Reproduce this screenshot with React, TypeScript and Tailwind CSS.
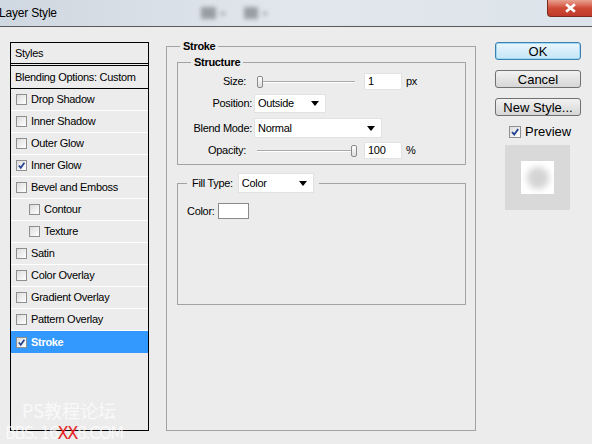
import React from 'react';

type Row = { label: string; checked?: boolean; indent?: boolean; selected?: boolean };

const rows: Row[] = [
  { label: 'Drop Shadow' },
  { label: 'Inner Shadow' },
  { label: 'Outer Glow' },
  { label: 'Inner Glow', checked: true },
  { label: 'Bevel and Emboss' },
  { label: 'Contour', indent: true },
  { label: 'Texture', indent: true },
  { label: 'Satin' },
  { label: 'Color Overlay' },
  { label: 'Gradient Overlay' },
  { label: 'Pattern Overlay' },
  { label: 'Stroke', checked: true, selected: true },
];

const Tick = () => (
  <svg viewBox="0 0 10 10" className="w-full h-full">
    <path d="M2 5 L4.2 7.6 L8.2 2" fill="none" stroke="#21408f" strokeWidth="1.8" />
  </svg>
);

const SmallBox = ({ checked }: { checked?: boolean }) => (
  <span className="w-[11px] h-[11px] shrink-0 border border-[#8f8f8f] bg-gradient-to-br from-[#dcdcdc] to-[#ffffff] flex items-center justify-center">
    {checked && <Tick />}
  </span>
);

const Arrow = () => (
  <svg viewBox="0 0 8 5" className="w-[8px] h-[5px]">
    <path d="M0 0 H8 L4 5 Z" fill="#000" />
  </svg>
);

const Select = ({ value, w }: { value: string; w: string }) => (
  <div className={`${w} h-full bg-white border border-[#e2e2e2] flex items-center justify-between pl-[3px] pr-[6px]`}>
    <span>{value}</span>
    <Arrow />
  </div>
);

const Slider = ({ pos }: { pos: 'start' | 'end' }) => (
  <div className="relative w-[98px] h-[14px] flex items-center">
    <div className="w-full h-[2px] border-t border-[#a9a9a9] border-b border-b-white" />
    <div
      className={`absolute top-[1px] w-[6px] h-[12px] rounded-[2px] border border-[#8a8a8a] bg-gradient-to-b from-white to-[#dcdcdc] ${
        pos === 'start' ? 'left-0' : 'right-[-2px]'
      }`}
    />
  </div>
);

const NumInput = ({ value }: { value: string }) => (
  <div className="w-[38px] h-[17px] bg-white border border-[#e2e2e2] flex items-center pl-[3px]">
    {value}
  </div>
);

const Button = ({ label, primary }: { label: string; primary?: boolean }) => (
  <div
    className={`w-[86px] h-[18px] rounded-[3px] flex items-center justify-center text-[13px] leading-none ${
      primary
        ? 'border border-[#3c7fb1] bg-gradient-to-b from-[#eaf6fd] to-[#c4e5f6] shadow-[0_0_0_1px_#9fd8f2_inset]'
        : 'border border-[#707070] bg-gradient-to-b from-[#f2f2f2] to-[#d6d6d6]'
    }`}
  >
    {label}
  </div>
);

export default function App() {
  return (
    <div className="relative w-[592px] h-[444px] overflow-hidden bg-[#ececec] text-black font-['Liberation_Sans',Arial,sans-serif]">
      {/* title bar */}
      <div className="h-[27px] border-b border-[#595959] bg-gradient-to-r from-[#cfd7e0] via-[#e2e7ed] to-[#dce3ea] flex items-center relative">
        <span className="text-[12px] -ml-[1px] tracking-[-0.2px]">Layer Style</span>
        <div className="flex items-center gap-[5px] ml-[144px] blur-[2px] opacity-60">
          <div className="w-[15px] h-[12px] bg-[#6b6f75]" />
          <div className="w-[4px] h-[3px] bg-[#6b6f75]" />
          <div className="w-[14px] h-[12px] bg-[#6b6f75] ml-[14px]" />
          <div className="w-[4px] h-[3px] bg-[#6b6f75]" />
        </div>
        <div className="absolute right-0 top-0 w-[45px] h-[17px] rounded-bl-[4px] border border-t-0 border-r-0 border-[#7a2a1f] bg-gradient-to-b from-[#e8a090] via-[#cf4a36] to-[#c0392b] flex items-center justify-center">
          <svg viewBox="0 0 10 9" className="w-[11px] h-[10px]">
            <path d="M1 1 L9 8 M9 1 L1 8" stroke="#fff" strokeWidth="2.4" />
          </svg>
        </div>
      </div>

      <div className="flex items-start pl-[10px] pt-[15px] text-[11px] tracking-[-0.3px]">
        {/* styles list */}
        <div className="w-[139px] h-[389px] border border-black">
          <div className="h-[23px] flex items-center pl-[4px] border-b-[3px] border-double border-black">Styles</div>
          <div className="h-[23px] flex items-center pl-[4px] border-b border-black">Blending Options: Custom</div>
          {rows.map((r) => (
            <div
              key={r.label}
              className={`h-[22px] flex items-center gap-[4px] ${r.indent ? 'pl-[18px]' : 'pl-[5px]'} ${
                r.selected ? 'bg-[#3399ff] text-white font-bold' : 'border-b border-white'
              }`}
            >
              <SmallBox checked={r.checked} />
              <span>{r.label}</span>
            </div>
          ))}
        </div>

        {/* main panel */}
        <fieldset className="ml-[17px] -mt-[3px] w-[310px] h-[392px] border border-[#a3a3a3] pl-[10px] pr-[9px]">
          <legend className="ml-[3px] px-[3px] font-bold leading-[14px]">Stroke</legend>

          <fieldset className="mt-[2px] h-[110px] border border-[#a3a3a3] pr-[10px]">
            <legend className="ml-[13px] px-[3px] font-bold leading-[14px]">Structure</legend>
            <div className="pt-[4px] flex flex-col">
              <div className="h-[17px] flex items-center">
                <span className="w-[70px] text-right pr-[2px]">Size:</span>
                <div className="ml-[9px]"><Slider pos="start" /></div>
                <div className="ml-[9px]"><NumInput value="1" /></div>
                <span className="ml-[4px]">px</span>
              </div>
              <div className="h-[19px] mt-[4px] flex items-center">
                <span className="w-[74px] text-right">Position:</span>
                <div className="ml-[2px] h-full"><Select value="Outside" w="w-[72px]" /></div>
              </div>
              <div className="h-[20px] mt-[5px] flex items-center">
                <span className="w-[74px] text-right">Blend Mode:</span>
                <div className="ml-[2px] h-full"><Select value="Normal" w="w-[128px]" /></div>
              </div>
              <div className="h-[17px] mt-[4px] flex items-center">
                <span className="w-[70px] text-right pr-[2px]">Opacity:</span>
                <div className="ml-[9px]"><Slider pos="end" /></div>
                <div className="ml-[9px]"><NumInput value="100" /></div>
                <span className="ml-[4px]">%</span>
              </div>
            </div>
          </fieldset>

          <fieldset className="mt-[8px] h-[132px] border border-[#a3a3a3]">
            <legend className="ml-[9px] px-[5px] h-[20px] flex items-center">
              <span>Fill Type:</span>
              <div className="ml-[5px] h-[20px]"><Select value="Color" w="w-[76px]" /></div>
            </legend>
            <div className="pt-[10px] pl-[9px] flex items-center">
              <span>Color:</span>
              <div className="ml-[3px] w-[31px] h-[16px] bg-white border border-[#8a8a8a]" />
            </div>
          </fieldset>
        </fieldset>

        {/* right column */}
        <div className="ml-[19px] w-[86px] flex flex-col tracking-normal">
          <Button label="OK" primary />
          <div className="mt-[10px]"><Button label="Cancel" /></div>
          <div className="mt-[10px]"><Button label="New Style..." /></div>
          <div className="mt-[9px] h-[13px] flex items-center gap-[4px] pl-[14px] text-[13px] leading-none">
            <span className="w-[12px] h-[12px] border border-[#8f8f8f] bg-gradient-to-br from-[#dcdcdc] to-white flex items-center justify-center">
              <Tick />
            </span>
            <span>Preview</span>
          </div>
          <div className="mt-[7px] ml-[10px] w-[65px] h-[65px] bg-[#d9d9d9] flex items-center justify-center">
            <div className="w-[33px] h-[33px] bg-white flex items-center justify-center">
              <div className="w-[22px] h-[22px] rounded-full bg-[#d4d4d4] blur-[3px]" />
            </div>
          </div>
        </div>
      </div>

      {/* watermark */}
      <div className="absolute left-[5px] top-[401px] flex flex-col gap-[4px] text-white/70 pointer-events-none">
        <div className="ml-[17px] h-[19px] text-[18px] leading-[19px] font-['Noto_Sans_CJK_SC',sans-serif]">PS教程论坛</div>
        <div className="h-[18px] flex text-[18px] leading-[18px] tracking-[-1.5px] whitespace-pre font-['DejaVu_Sans_Condensed','Liberation_Sans',sans-serif]">
          <span className="block h-[18px]">BBS. 16</span>
          <span className="block h-[18px] text-[#e32222]">XX</span>
          <span className="block h-[18px]">8.COM</span>
        </div>
      </div>
    </div>
  );
}
